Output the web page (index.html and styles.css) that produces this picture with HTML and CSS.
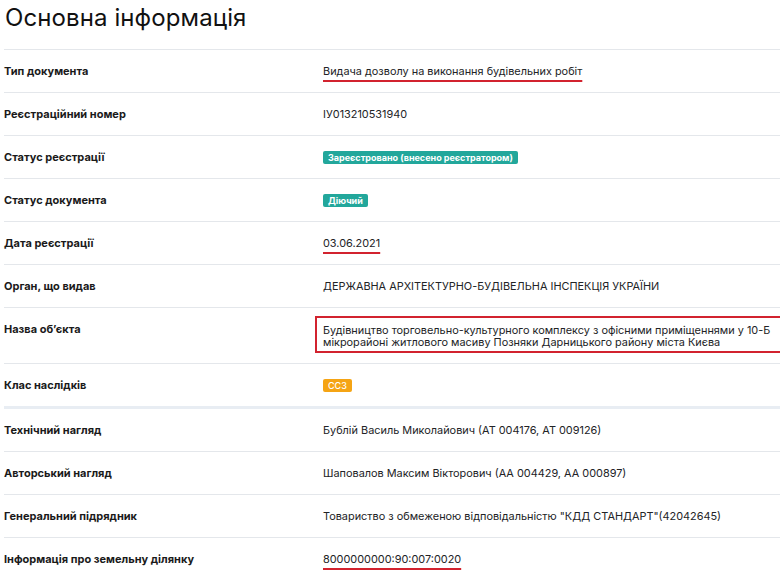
FILE: index.html
```html
<!DOCTYPE html>
<html lang="uk">
<head>
<meta charset="utf-8">
<title>Основна інформація</title>
<link rel="stylesheet" href="styles.css">
</head>
<body>
<main class="page">
  <h1 class="title">Основна інформація</h1>
  <dl class="info">
    <div class="row">
      <dt class="label">Тип документа</dt>
      <dd class="value"><span class="mark">Видача дозволу на виконання будівельних робіт</span></dd>
    </div>
    <div class="row">
      <dt class="label">Реєстраційний номер</dt>
      <dd class="value">ІУ013210531940</dd>
    </div>
    <div class="row">
      <dt class="label">Статус реєстрації</dt>
      <dd class="value"><span class="badge badge-teal">Зареєстровано (внесено реєстратором)</span></dd>
    </div>
    <div class="row">
      <dt class="label">Статус документа</dt>
      <dd class="value"><span class="badge badge-teal">Діючий</span></dd>
    </div>
    <div class="row">
      <dt class="label">Дата реєстрації</dt>
      <dd class="value"><span class="mark">03.06.2021</span></dd>
    </div>
    <div class="row">
      <dt class="label">Орган, що видав</dt>
      <dd class="value">ДЕРЖАВНА АРХІТЕКТУРНО-БУДІВЕЛЬНА ІНСПЕКЦІЯ УКРАЇНИ</dd>
    </div>
    <div class="row row-boxed">
      <dt class="label">Назва об’єкта</dt>
      <dd class="value"><div class="boxed">Будівництво торговельно-культурного комплексу з офісними приміщеннями у 10-Б<br>мікрорайоні житлового масиву Позняки Дарницького району міста Києва</div></dd>
    </div>
    <div class="row row-group-end">
      <dt class="label">Клас наслідків</dt>
      <dd class="value"><span class="badge badge-orange">СС3</span></dd>
    </div>
    <div class="row">
      <dt class="label">Технічний нагляд</dt>
      <dd class="value">Бублій Василь Миколайович (АТ 004176, АТ 009126)</dd>
    </div>
    <div class="row">
      <dt class="label">Авторський нагляд</dt>
      <dd class="value">Шаповалов Максим Вікторович (АА 004429, АА 000897)</dd>
    </div>
    <div class="row">
      <dt class="label">Генеральний підрядник</dt>
      <dd class="value">Товариство з обмеженою відповідальністю "КДД СТАНДАРТ"(42042645)</dd>
    </div>
    <div class="row row-last">
      <dt class="label">Інформація про земельну ділянку</dt>
      <dd class="value"><span class="mark">8000000000:90:007:0020</span></dd>
    </div>
  </dl>
</main>
</body>
</html>
```
FILE: styles.css
```css
html, body {
  margin: 0;
  padding: 0;
  background: #ffffff;
  overflow: hidden;
}

body {
  font-family: Inter, "Noto Sans", "Liberation Sans", sans-serif;
  color: #1f2023;
}

.page {
  padding: 0 0 0 4px;
  width: 900px;
}

.title {
  margin: 0;
  padding: 4px 0 0 1px;
  height: 50px;
  box-sizing: border-box;
  font-size: 24px;
  font-weight: 400;
  line-height: 28px;
  color: #111111;
  letter-spacing: 0.1px;
  border-bottom: 1px solid #e4e7eb;
}

.info {
  margin: 0;
  padding: 0;
}

.row {
  display: grid;
  grid-template-columns: 319px 1fr;
  align-items: start;
  height: 42px;
  box-sizing: content-box;
  padding: 0;
  border-bottom: 1px solid #e4e7eb;
  font-size: 11px;
  line-height: 14px;
}

.label,
.value {
  margin: 0;
  padding-top: 14px;
}

.label {
  font-weight: 700;
  color: #1a1a1a;
}

.value {
  color: #222326;
  font-size: 10.9px;
}

.mark {
  text-decoration: underline;
  text-decoration-color: #d2232f;
  text-decoration-thickness: 2px;
  text-underline-offset: 5px;
}

.badge {
  display: inline-block;
  font-size: 9px;
  font-weight: 700;
  line-height: 13px;
  color: #ffffff;
  padding: 0 5px;
  border-radius: 2px;
  vertical-align: top;
  margin-top: 1px;
}

.badge-teal {
  background: #22a79b;
}

.badge-orange {
  background: #f5a414;
  font-weight: 500;
}

.row-boxed {
  height: 55px;
}

.boxed {
  margin: -6px 0 0 -8px;
  width: 560px;
  border: 2px solid #d2232f;
  padding: 6px 6px 3px;
  line-height: 12px;
  white-space: nowrap;
}

.row-group-end {
  height: 42px;
  border-bottom: 3px solid #e8edf3;
}

.row-last {
  border-bottom: none;
}
```
